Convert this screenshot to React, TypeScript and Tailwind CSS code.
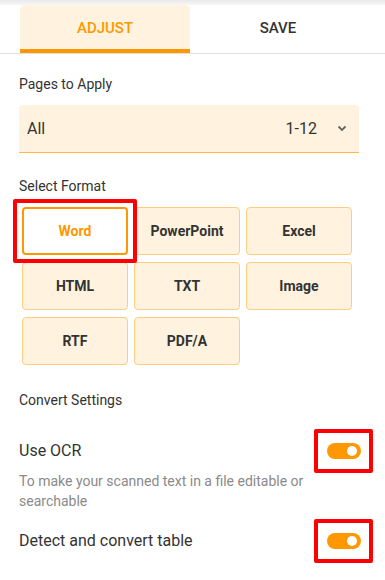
import React from "react";

const formats = ["Word", "PowerPoint", "Excel", "HTML", "TXT", "Image", "RTF", "PDF/A"];

function Toggle() {
  return (
    <div className="relative">
      <div className="w-[34px] h-[16px] rounded-full bg-[#ff9800] flex items-center justify-end pr-[4px]">
        <div className="w-[10px] h-[10px] rounded-full bg-white" />
      </div>
      <div className="absolute left-[-13px] top-[-14px] w-[59px] h-[44px] border-[4px] border-[#ff0000] rounded-[2px] pointer-events-none" />
    </div>
  );
}

export default function App() {
  return (
    <div
      className="w-[385px] h-[580px] bg-white overflow-hidden text-[#333]"
      style={{ fontFamily: "Roboto, 'Noto Sans', sans-serif" }}
    >
      <div className="h-[5px] bg-gradient-to-b from-[#e9e9e9] to-[#f7f7f7]" />
      <div className="flex pl-[20px] border-b border-[#e0e0e0]">
        <div className="w-[170px] h-[48px] bg-[#fff3e0] rounded-t-[5px] border-b-[4px] border-[#ff9800] flex items-center justify-center text-[15px] font-medium text-[#ff9800] pt-[3px]">
          ADJUST
        </div>
        <div className="w-[176px] h-[48px] flex items-center justify-center text-[15px] font-medium text-[#333] pb-[1px]">
          SAVE
        </div>
      </div>

      <div className="px-[19px]">
        <div className="mt-[20px] h-[20px] leading-[20px] text-[14px] text-[#333]">Pages to Apply</div>
        <div className="mt-[11px] w-[340px] h-[48px] bg-[#fff3e0] rounded-t-[4px] border-b border-[#ffb74d] flex items-center pl-[8px] pr-[10px] text-[16px] text-[#333]">
          <span className="flex-1">All</span>
          <span className="mr-[20px]">1-12</span>
          <svg width="10" height="7" viewBox="0 0 10 7" className="mr-[2px]">
            <polyline points="1.5,1.5 5,5 8.5,1.5" fill="none" stroke="#666" strokeWidth="1.8" />
          </svg>
        </div>

        <div className="mt-[23px] h-[20px] leading-[20px] text-[14px] text-[#333]">Select Format</div>
        <div className="mt-[11px] ml-[3px] grid grid-cols-[106px_106px_106px] gap-x-[6px] gap-y-[7px]">
          {formats.map((f) =>
            f === "Word" ? (
              <div key={f} className="relative">
                <div className="h-[48px] bg-white border-[2px] border-[#ff9800] rounded-[4px] flex items-center justify-center text-[14px] font-bold text-[#ff9800]">
                  {f}
                </div>
                <div className="absolute left-[-9px] top-[-8px] w-[124px] h-[64px] border-[4px] border-[#ff0000] rounded-[2px] pointer-events-none" />
              </div>
            ) : (
              <div
                key={f}
                className="h-[48px] bg-[#fff3e0] border border-[#ffcc80] rounded-[4px] flex items-center justify-center text-[14px] font-bold text-[#333]"
              >
                {f}
              </div>
            )
          )}
        </div>

        <div className="mt-[25px] h-[20px] leading-[20px] text-[14px] text-[#333]">Convert Settings</div>

        <div className="mt-[31px] flex items-center justify-between w-[342px] h-[20px]">
          <span className="text-[16px] leading-[20px] text-[#333]">Use OCR</span>
          <Toggle />
        </div>
        <div className="mt-[10px] w-[300px] text-[14px] leading-[20px] text-[#8a8a8a]">
          To make your scanned text in a file editable or searchable
        </div>
        <div className="mt-[20px] flex items-center justify-between w-[342px] h-[20px]">
          <span className="text-[16px] leading-[20px] text-[#333]">Detect and convert table</span>
          <Toggle />
        </div>
      </div>
    </div>
  );
}
